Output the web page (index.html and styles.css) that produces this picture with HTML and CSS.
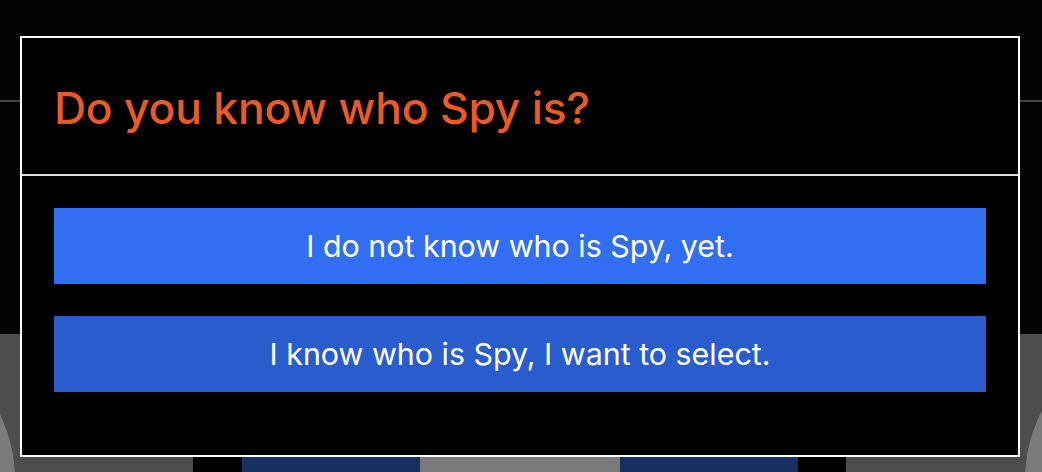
FILE: index.html
```html
<!DOCTYPE html>
<html lang="en">
<head>
<meta charset="utf-8">
<title>Spy</title>
<link rel="stylesheet" href="styles.css">
</head>
<body>
<div class="page">
  <header class="topbar"></header>
  <main class="board">
    <div class="spacer"></div>
    <div class="cards">
      <div class="panel panel-left"></div>
      <div class="gap-a"></div>
      <div class="card card-blue"></div>
      <div class="card card-grey"></div>
      <div class="card card-blue"></div>
      <div class="gap-b"></div>
      <div class="panel panel-right"></div>
    </div>
  </main>
</div>

<div class="modal" role="dialog" aria-labelledby="modal-title">
  <div class="modal-header">
    <h1 id="modal-title" class="modal-title">Do you know who Spy is?</h1>
  </div>
  <div class="modal-body">
    <button class="choice choice-primary" type="button">I do not know who is Spy, yet.</button>
    <button class="choice choice-secondary" type="button">I know who is Spy, I want to select.</button>
  </div>
</div>
</body>
</html>
```
FILE: styles.css
```css
html, body {
  margin: 0;
  padding: 0;
  background: #030303;
  height: 100%;
  overflow: hidden;
}

body {
  font-family: Inter, "Noto Sans", "Liberation Sans", sans-serif;
  color: #fff;
}

.page {
  display: flex;
  flex-direction: column;
  height: 472px;
}

.topbar {
  height: 100px;
  border-bottom: 2px solid #464646;
  flex: none;
}

.board {
  flex: 1;
  display: flex;
  flex-direction: column;
}

.spacer {
  height: 232px;
  flex: none;
}

.cards {
  flex: 1;
  display: flex;
}

.panel {
  background: #4d4d4d;
}

.panel-left {
  width: 193px;
  background: radial-gradient(circle 150px at -135px 146px, #7b7b7b 149.5px, #4d4d4d 150.5px);
}

.panel-right {
  width: 196px;
  background: radial-gradient(circle 150px at 329px 146px, #7b7b7b 149.5px, #4d4d4d 150.5px);
}

.gap-a {
  width: 49px;
  background: #000;
}

.gap-b {
  width: 48px;
  background: #000;
}

.card {
  margin-top: 100px;
}

.card-blue {
  width: 178px;
  background: #16305f;
}

.card-grey {
  width: 200px;
  background: #7b7b7b;
}

.modal {
  position: fixed;
  left: 20px;
  top: 36px;
  width: 996px;
  height: 417px;
  border: 2px solid #fff;
  background: #000;
  display: flex;
  flex-direction: column;
}

.modal-header {
  height: 138px;
  box-sizing: border-box;
  border-bottom: 2px solid #dedede;
  padding: 0 32px;
  display: flex;
  align-items: center;
  flex: none;
}

.modal-title {
  margin: 0;
  color: #e85a27;
  font-size: 44.4px;
  font-weight: 500;
  letter-spacing: -0.2px;
  line-height: 1;
  padding-top: 4px;
}

.modal-body {
  padding: 32px 32px 0;
  display: flex;
  flex-direction: column;
  gap: 32px;
}

.choice {
  height: 76px;
  border: 0;
  border-radius: 0;
  font-family: inherit;
  font-size: 30.4px;
  font-weight: 400;
  color: #fff;
  padding: 0;
  cursor: pointer;
}

.choice-primary {
  background: #316ef2;
}

.choice-secondary {
  background: #295ccd;
}
```
